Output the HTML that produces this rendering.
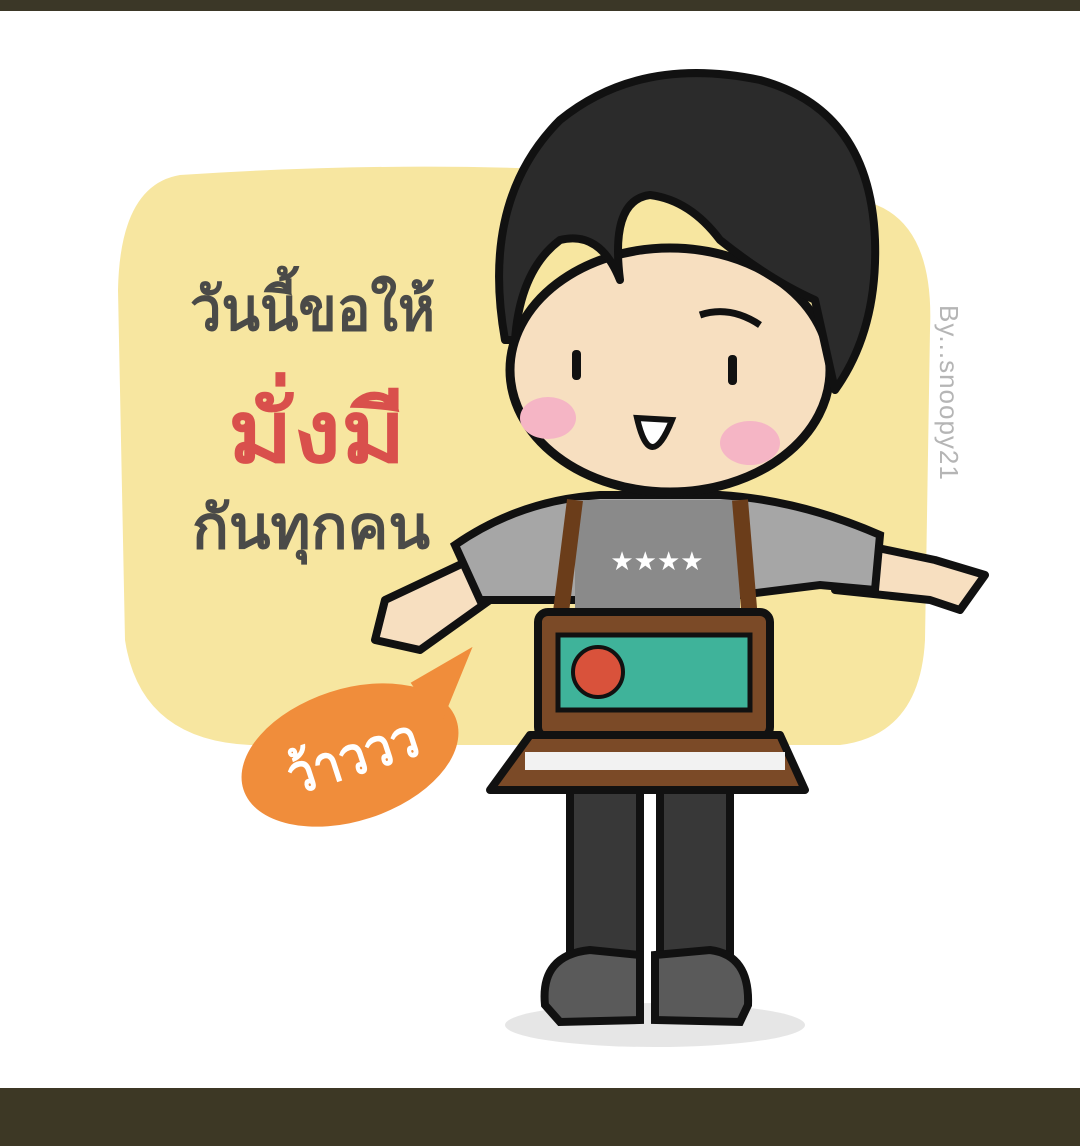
<!DOCTYPE html>
<html><head><meta charset="utf-8">
<style>
html,body{margin:0;padding:0;width:1080px;height:1146px;overflow:hidden;background:#fff}
</style></head>
<body>
<svg width="1080" height="1146" viewBox="0 0 1080 1146" xmlns="http://www.w3.org/2000/svg">
<rect x="0" y="0" width="1080" height="11" fill="#3b3727"/>
<rect x="0" y="1088" width="1080" height="58" fill="#3d3825"/>
<path d="M180 175 Q560 150 860 200 Q935 215 930 330 L925 640 Q920 735 840 745 L250 745 Q140 740 125 640 L118 290 Q120 185 180 175Z" fill="#f7e6a0"/>
<g font-family="'Liberation Sans','Noto Sans CJK SC',sans-serif" font-weight="bold">
<text x="190" y="330" font-size="60" fill="#4a4a48" textLength="245" lengthAdjust="spacingAndGlyphs">วันนี้ขอให้</text>
<text x="228" y="462" font-size="86" fill="#d9504c" textLength="178" lengthAdjust="spacingAndGlyphs">มั่งมี</text>
<text x="192" y="548" font-size="60" fill="#4a4a48" textLength="238" lengthAdjust="spacingAndGlyphs">กันทุกคน</text>
</g>
<g transform="rotate(-18 350 755)">
<ellipse cx="350" cy="755" rx="112" ry="66" fill="#f08d3b"/>
<path d="M430 705 L500 690 L445 755Z" fill="#f08d3b"/>
<text x="352" y="776" text-anchor="middle" font-family="'Liberation Sans','Noto Sans CJK SC',sans-serif" font-weight="bold" font-size="54" fill="#fff" textLength="135" lengthAdjust="spacingAndGlyphs">ว้าววว</text>
</g>
<text transform="translate(940 305) rotate(90)" font-family="'Liberation Sans',sans-serif" font-size="26" fill="#b5b5b5" letter-spacing="1">By...snoopy21</text>
<ellipse cx="655" cy="1025" rx="150" ry="22" fill="#e6e6e6"/>
<path d="M470 560 L385 600 L375 640 L420 650 L490 600Z" fill="#f7dfc0" stroke="#111" stroke-width="8" stroke-linejoin="round"/>
<path d="M840 540 L935 560 L985 575 L960 610 L930 600 L835 590Z" fill="#f7dfc0" stroke="#111" stroke-width="8" stroke-linejoin="round"/>
<path d="M455 545 Q520 500 600 495 L720 495 Q800 500 880 535 L875 590 L820 585 L700 600 L520 600 L480 600 Z" fill="#a6a6a6" stroke="#111" stroke-width="8"/>
<rect x="570" y="790" width="70" height="170" fill="#383838" stroke="#111" stroke-width="8"/>
<rect x="660" y="790" width="70" height="170" fill="#383838" stroke="#111" stroke-width="8"/>
<path d="M545 1005 Q540 955 590 950 L640 955 L640 1020 L560 1022Z" fill="#5a5a5a" stroke="#111" stroke-width="8"/>
<path d="M655 955 L710 950 Q750 955 748 1005 L740 1022 L655 1020Z" fill="#5a5a5a" stroke="#111" stroke-width="8"/>
<rect x="575" y="500" width="165" height="120" fill="#8a8a8a"/>
<text x="657" y="570" text-anchor="middle" font-size="26" fill="#fff" font-family="'DejaVu Sans',sans-serif">★★★★</text>
<path d="M575 500 L560 620 M740 500 L750 620" stroke="#6b3d1a" stroke-width="16" fill="none"/>
<rect x="538" y="612" width="232" height="125" rx="10" fill="#7b4a27" stroke="#111" stroke-width="8"/>
<rect x="558" y="635" width="192" height="75" fill="#3fb39a" stroke="#111" stroke-width="5"/>
<circle cx="598" cy="672" r="25" fill="#d9523b" stroke="#111" stroke-width="4"/>
<path d="M530 735 L780 735 L805 790 L490 790Z" fill="#7b4a27" stroke="#111" stroke-width="8" stroke-linejoin="round"/>
<rect x="525" y="752" width="260" height="18" fill="#f2f2f2"/>
<ellipse cx="670" cy="370" rx="160" ry="122" fill="#f7dfc0" stroke="#111" stroke-width="9"/>
<path d="M505 340 Q480 200 560 120 Q640 55 760 80 Q870 110 875 240 Q878 330 835 390 L815 300 Q770 280 720 240 Q690 200 650 195 Q610 200 620 280 Q600 230 560 240 Q520 270 515 340 Z" fill="#2b2b2b" stroke="#111" stroke-width="8" stroke-linejoin="round"/>
<ellipse cx="548" cy="418" rx="28" ry="21" fill="#f5b5c5"/>
<ellipse cx="750" cy="443" rx="30" ry="22" fill="#f5b5c5"/>
<rect x="572" y="350" width="9" height="30" rx="4" fill="#111"/>
<rect x="728" y="355" width="9" height="30" rx="4" fill="#111"/>
<path d="M700 315 Q730 305 760 325" stroke="#111" stroke-width="7" fill="none"/>
<path d="M637 418 Q650 475 672 420 Z" fill="#fff" stroke="#111" stroke-width="6"/>
</svg>
</body></html>
